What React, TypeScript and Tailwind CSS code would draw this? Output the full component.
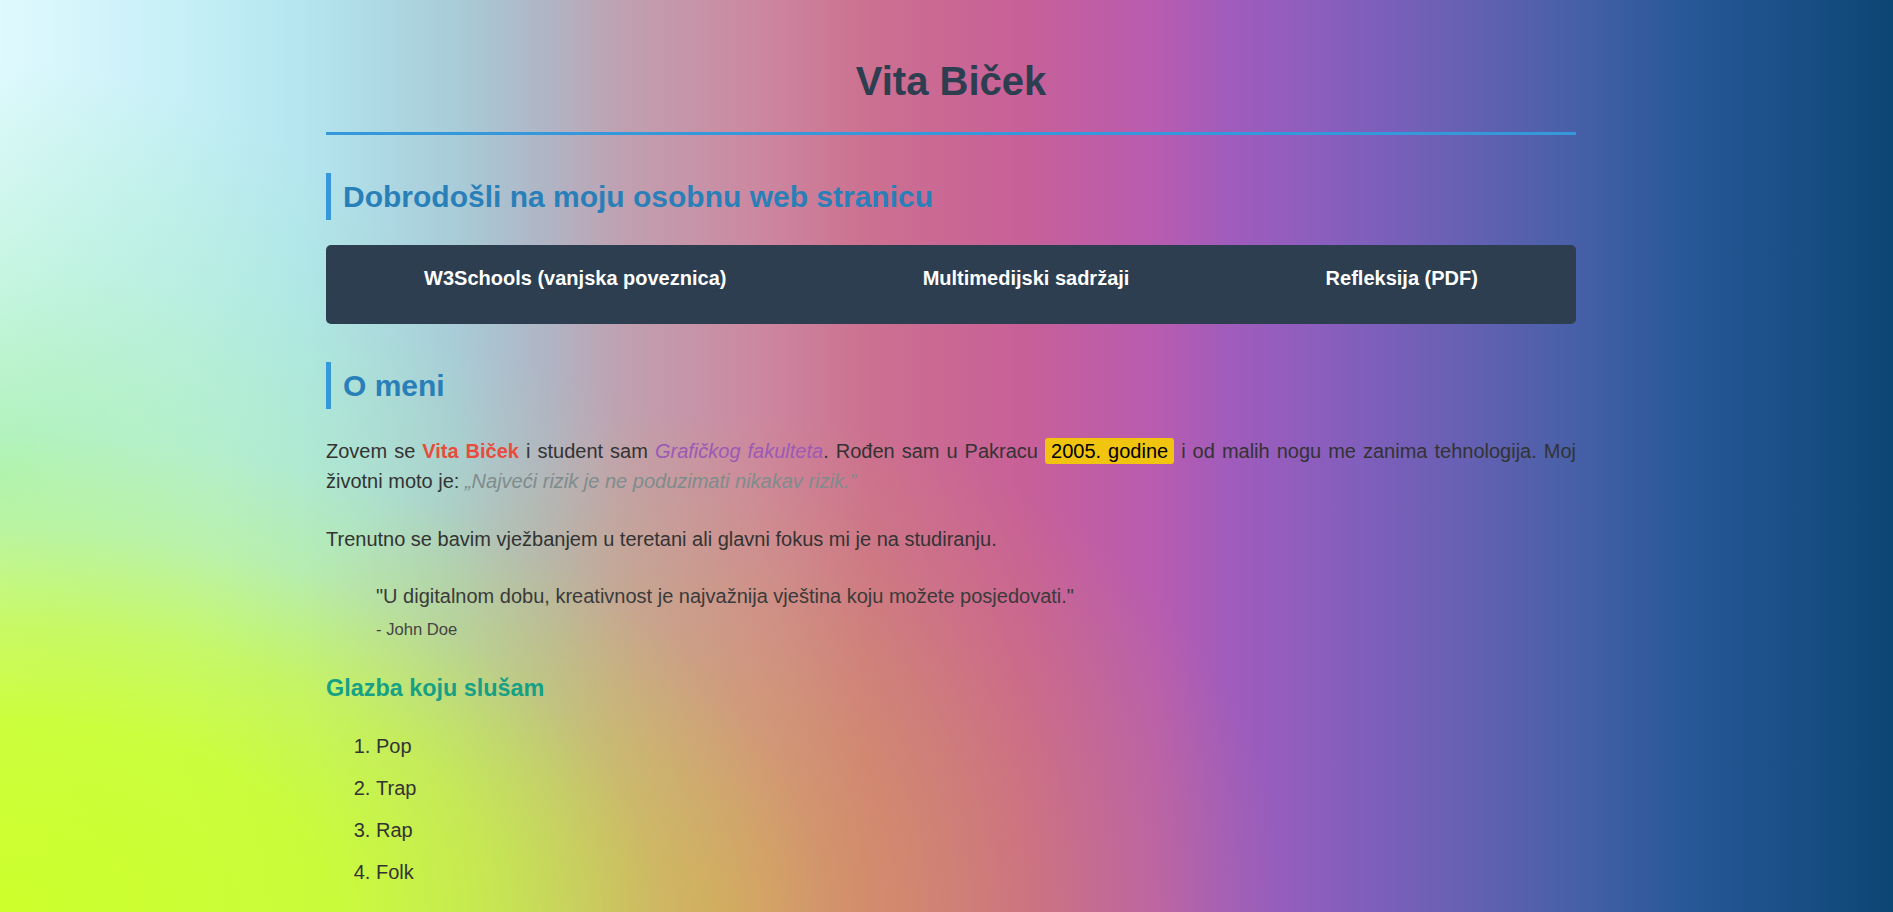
export default function App() {
  return (
    <div className="min-h-screen bg-fixed [background-image:radial-gradient(ellipse_58%_70%_at_0%_100%,rgba(204,255,42,1)_0%,rgba(204,255,42,0.9)_30%,rgba(204,252,46,0.68)_45%,rgba(204,250,50,0.28)_60%,rgba(204,250,50,0.07)_75%,rgba(204,250,50,0)_100%),radial-gradient(ellipse_30%_55%_at_38%_100%,rgba(218,160,70,0.6)_0%,rgba(218,160,70,0.3)_50%,rgba(218,160,70,0)_100%),radial-gradient(ellipse_26%_45%_at_0%_52%,rgba(150,238,170,0.7)_0%,rgba(150,238,170,0.32)_50%,rgba(150,238,170,0)_100%),linear-gradient(to_right,#dff9fe_0%,#c8f0f7_9%,#b4e6f0_16%,#a8ccd8_24%,#b0b4c4_29%,#c0a0b0_33%,#cc88a0_40%,#cc7090_46%,#c86098_54%,#b85cb0_61%,#a05cbc_65%,#8a5ebe_70%,#6860b4_77%,#4860a8_83%,#285898_89%,#0c4674_100%)] font-['Liberation_Sans',Arial,sans-serif] text-[#333] text-[20px]">
      <div className="pl-[9px]">
        <div className="w-[1250px] mx-auto pt-[58px] pb-[60px]">
          <h1 className="text-center text-[40px] leading-[46px] font-bold text-[#2c3e50] pb-[28px] border-b-[3px] border-[#3498db]">
            Vita Biček
          </h1>

          <h2 className="mt-[38px] border-l-[5px] border-[#3498db] pl-3 py-[6px] text-[30px] leading-[35px] font-bold text-[#2980b9]">
            Dobrodošli na moju osobnu web stranicu
          </h2>

          <nav className="mt-[25px] h-[79px] bg-[#2c3e50] rounded-[5px] flex justify-around items-start pt-[22px]">
            <a href="#" className="text-white font-bold text-[20px] leading-[23px]">
              W3Schools (vanjska poveznica)
            </a>
            <a href="#" className="text-white font-bold text-[20px] leading-[23px]">
              Multimedijski sadržaji
            </a>
            <a href="#" className="text-white font-bold text-[20px] leading-[23px]">
              Refleksija (PDF)
            </a>
          </nav>

          <h2 className="mt-[38px] border-l-[5px] border-[#3498db] pl-3 py-[6px] text-[30px] leading-[35px] font-bold text-[#2980b9]">
            O meni
          </h2>

          <p className="mt-[27px] leading-[30px] text-justify">
            Zovem se <strong className="font-bold text-[#e74c3c]">Vita Biček</strong> i student sam{" "}
            <em className="italic text-[#9b59b6]">Grafičkog fakulteta</em>. Rođen sam u Pakracu{" "}
            <mark className="bg-[#f1c40f] text-black px-[6px] py-[2px] rounded-[3px]">2005. godine</mark> i od malih
            nogu me zanima tehnologija. Moj životni moto je:{" "}
            <em className="italic text-[#7f8c8d]">„Najveći rizik je ne poduzimati nikakav rizik.”</em>
          </p>

          <p className="mt-[28px] leading-[30px]">
            Trenutno se bavim vježbanjem u teretani ali glavni fokus mi je na studiranju.
          </p>

          <blockquote className="mt-[27px] ml-[50px]">
            <p className="leading-[30px] text-[#3a3a3a]">
              "U digitalnom dobu, kreativnost je najvažnija vještina koju možete posjedovati."
            </p>
            <cite className="block not-italic mt-[7px] text-[16.6px] leading-[24px] text-[#444]">- John Doe</cite>
          </blockquote>

          <h3 className="mt-[29px] text-[23.4px] leading-[35px] font-bold text-[#16a085]">Glazba koju slušam</h3>

          <ol className="mt-[25px] list-decimal pl-[50px]">
            <li className="leading-[30px] mb-[12px]">Pop</li>
            <li className="leading-[30px] mb-[12px]">Trap</li>
            <li className="leading-[30px] mb-[12px]">Rap</li>
            <li className="leading-[30px] mb-[12px]">Folk</li>
          </ol>
        </div>
      </div>
    </div>
  );
}
